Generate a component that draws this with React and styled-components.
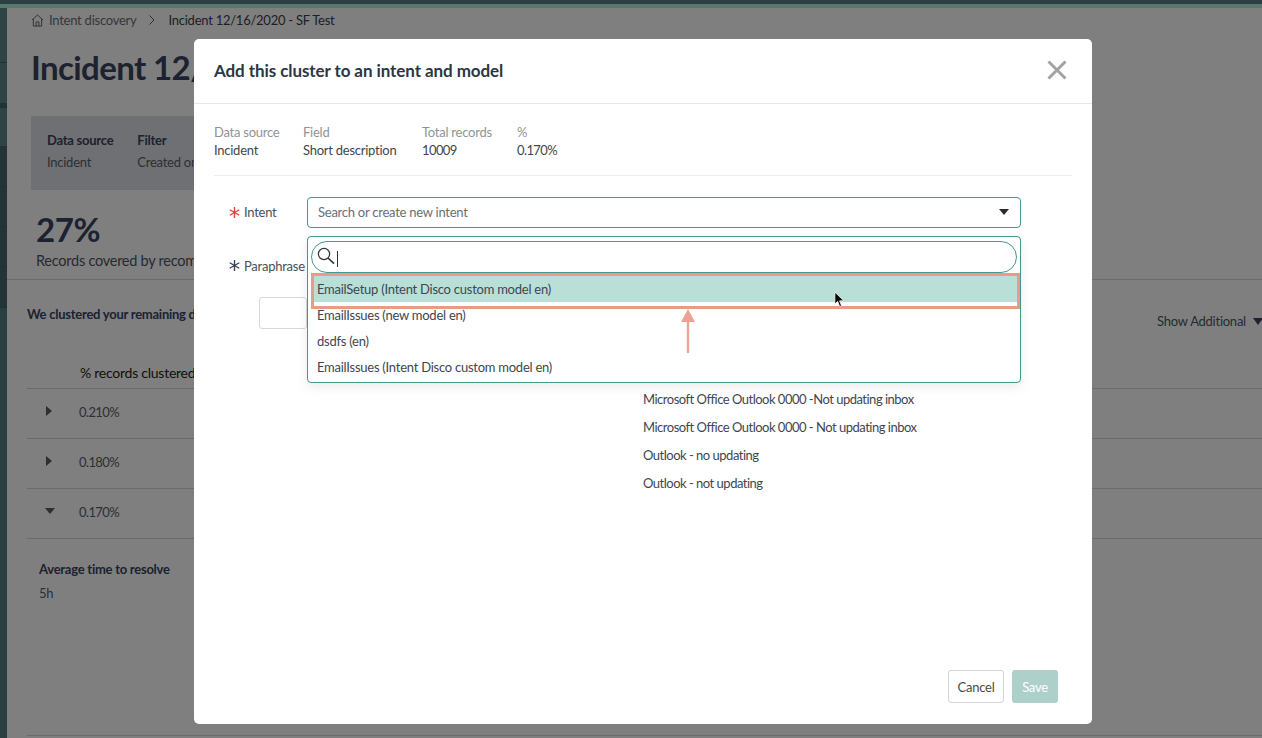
import { createGlobalStyle } from "styled-components";
import styled from "styled-components";

const GlobalStyle = createGlobalStyle`
    html, body {
        margin: 0;
        padding: 0;
        height: 100%;
        overflow: hidden;
        background: #fff;
    }
    * {
        box-sizing: border-box;
    }
    body {
        font-family: Lato, "Noto Sans", sans-serif;
        font-size: 13px;
        letter-spacing: -0.25px;
        color: #39445e;
    }
`;

const rows = ["0.210%", "0.180%", "0.170%"];
const options = [
    "EmailSetup (Intent Disco custom model en)",
    "EmailIssues (new model en)",
    "dsdfs (en)",
    "EmailIssues (Intent Disco custom model en)",
];
const phrases = [
    "Microsoft Office Outlook 0000 -Not updating inbox",
    "Microsoft Office Outlook 0000 - Not updating inbox",
    "Outlook - no updating",
    "Outlook - not updating",
];
const facts = [
    { label: "Data source", value: "Incident", width: 89 },
    { label: "Field", value: "Short description", width: 119 },
    { label: "Total records", value: "10009", width: 95, numeric: true },
    { label: "%", value: "0.170%", width: 60, numeric: true },
];
const navItems = [
    { height: 55 },
    { height: 41 },
    { height: 4, dark: true },
    { height: 39 },
    { height: 40, dark: true },
    { height: 40, dark: true },
    { height: 40, dark: true },
    { height: 41, dark: true },
];

export default function App() {
    return (
        <Screen>
            <GlobalStyle />
            <TopBar />
            <Shell>
                <Sidebar>
                    {navItems.map((item, i) => (
                        <NavItem key={i} $height={item.height} $dark={item.dark} />
                    ))}
                </Sidebar>
                <Content>
                    <Crumbs>
                        <HomeIcon />
                        <CrumbLink>Intent discovery</CrumbLink>
                        <CrumbArrow viewBox="0 0 8 12">
                            <path d="M1.5 1.5 6 6l-4.5 4.5" fill="none" stroke="#5c5c5c" strokeWidth="1" />
                        </CrumbArrow>
                        <span>Incident 12/16/2020 - SF Test</span>
                    </Crumbs>
                    <PageTitle>Incident 12/16/2020 - SF Test</PageTitle>
                    <SummaryBox>
                        <SummaryCol>
                            <strong>Data source</strong>
                            <span>Incident</span>
                        </SummaryCol>
                        <SummaryCol>
                            <strong>Filter</strong>
                            <span>Created on</span>
                        </SummaryCol>
                    </SummaryBox>
                    <Coverage>
                        <Percent>27%</Percent>
                        <CoverageText>Records covered by recommendations</CoverageText>
                    </Coverage>
                    <ClusterHead>
                        <ClusterTitle>We clustered your remaining data</ClusterTitle>
                        <ShowAdditional>
                            Show Additional <DownMark />
                        </ShowAdditional>
                    </ClusterHead>
                    <TableHead>
                        <TableHeadText>% records clustered</TableHeadText>
                    </TableHead>
                    {rows.map((row, i) => (
                        <TableRow key={row}>
                            <Caret $open={i === 2} />
                            <span>{row}</span>
                        </TableRow>
                    ))}
                    <Resolve>
                        <strong>Average time to resolve</strong>
                        <span>5h</span>
                    </Resolve>
                    <BottomRule />
                </Content>
            </Shell>

            <Backdrop />

            <Modal>
                <ModalHeader>
                    <ModalTitle>Add this cluster to an intent and model</ModalTitle>
                    <CloseIcon viewBox="0 0 20 20">
                        <path d="M1.5 1.5l17 17M18.5 1.5l-17 17" stroke="#a3a3a3" strokeWidth="3" fill="none" />
                    </CloseIcon>
                </ModalHeader>
                <ModalBody>
                    <Facts>
                        {facts.map(f => (
                            <Fact key={f.label} $width={f.width}>
                                <FactLabel>{f.label}</FactLabel>
                                <FactValue $numeric={f.numeric}>{f.value}</FactValue>
                            </Fact>
                        ))}
                    </Facts>
                    <FormRow>
                        <FieldLabel>
                            <RequiredMark color="#e0443a" />
                            Intent
                        </FieldLabel>
                        <SelectWrap>
                            <Select>
                                Search or create new intent
                                <SelectArrow />
                            </Select>
                            <Dropdown>
                                <SearchBox>
                                    <SearchIcon viewBox="0 0 18 18">
                                        <circle cx="7" cy="7" r="5.6" fill="none" stroke="#333" strokeWidth="1.2" />
                                        <path d="M11 11l6 5.6" stroke="#333" strokeWidth="1.6" />
                                    </SearchIcon>
                                    <TextCaret />
                                </SearchBox>
                                {options.map((o, i) => (
                                    <Option key={o} $active={i === 0}>{o}</Option>
                                ))}
                                <Highlight />
                                <Pointer viewBox="0 0 12 18">
                                    <path d="M1 1v13l3-3 2.2 5.5 2-.8L6 10.400h4.500z" fill="#000" stroke="#fff" strokeWidth=".8" />
                                </Pointer>
                                <UpArrow viewBox="0 0 16 44">
                                    <path d="M8 0l7 13H9.200v31H6.800V13H1z" fill="#eda394" />
                                </UpArrow>
                            </Dropdown>
                        </SelectWrap>
                    </FormRow>
                    <ParaphraseRow>
                        <FieldLabel>
                            <RequiredMark color="#39445e" />
                            Paraphrase
                        </FieldLabel>
                    </ParaphraseRow>
                    <ParaphraseInput />
                    <Phrases>
                        {phrases.map(p => <li key={p}>{p}</li>)}
                    </Phrases>
                </ModalBody>
                <ModalFooter>
                    <CancelButton>Cancel</CancelButton>
                    <SaveButton>Save</SaveButton>
                </ModalFooter>
            </Modal>
        </Screen>
    );
}

function HomeIcon() {
    return (
        <HomeSvg viewBox="0 0 14 14">
            <path d="M1 6.500 7 1l6 5.500M2.500 5.500V13h9V5.500M5.500 13V8.500h3V13" fill="none" stroke="#5c5c5c" strokeWidth="1" />
        </HomeSvg>
    );
}

function RequiredMark({ color }) {
    return (
        <MarkSvg viewBox="0 0 12 12">
            <path d="M6 0v12M.8 3l10.400 6M11.200 3 .8 9" stroke={color} strokeWidth="1.500" fill="none" />
        </MarkSvg>
    );
}

const Screen = styled.div`
    position: relative;
    width: 1262px;
    height: 738px;
    overflow: hidden;
    display: flex;
    flex-direction: column;
`;

const TopBar = styled.div`
    height: 8px;
    flex-shrink: 0;
    background: linear-gradient(#547e84 0 4px, #b0f0d8 4px);
`;

const Shell = styled.div`
    flex: 1;
    display: flex;
    min-height: 0;
`;

const Sidebar = styled.div`
    width: 7px;
    flex-shrink: 0;
    background: #547e84;
`;

const NavItem = styled.div`
    height: ${({ $height }) => $height}px;
    background: ${({ $dark }) => $dark ? "#44696e" : "#5a868a"};
    border-bottom: 1px solid #3f6267;
`;

const Content = styled.div`
    flex: 1;
    min-width: 0;
`;

const Crumbs = styled.div`
    display: flex;
    align-items: center;
    height: 24px;
    padding-left: 24px;
    color: #3a3f4a;
`;

const HomeSvg = styled.svg`
    width: 13px;
    height: 13px;
    margin-right: 5px;
`;

const CrumbLink = styled.span`
    color: #6c6f76;
`;

const CrumbArrow = styled.svg`
    width: 8px;
    height: 12px;
    margin: 0 12px;
`;

const PageTitle = styled.h1`
    width: 163px;
    margin: 14px 0 0 24px;
    overflow: hidden;
    font-size: 33px;
    line-height: 42px;
    letter-spacing: -0.6px;
    font-weight: 700;
    white-space: nowrap;
`;

const SummaryBox = styled.div`
    display: flex;
    gap: 24px;
    width: 163px;
    height: 74px;
    margin: 28px 0 0 24px;
    padding: 16px 0 16px 16px;
    overflow: hidden;
    background: #dfe0e6;
    white-space: nowrap;
`;

const SummaryCol = styled.div`
    display: flex;
    flex-direction: column;
    gap: 6px;
    line-height: 16px;
    color: #5a5e68;

    strong {
        color: #39445e;
    }
`;

const Coverage = styled.div`
    padding: 20px 0 7px 29px;
    border-bottom: 1px solid #d6d6d6;
`;

const Percent = styled.div`
    height: 40px;
    font-size: 33px;
    line-height: 38px;
    letter-spacing: -0.4px;
    font-weight: 700;
`;

const CoverageText = styled.div`
    width: 158px;
    overflow: hidden;
    font-size: 14.5px;
    line-height: 22px;
    color: #4e5462;
    white-space: nowrap;
`;

const ClusterHead = styled.div`
    display: flex;
    justify-content: space-between;
    height: 66px;
    padding: 26px 0 0 20px;
`;

const ClusterTitle = styled.strong`
    width: 167px;
    height: 18px;
    overflow: hidden;
    white-space: nowrap;
`;

const ShowAdditional = styled.span`
    margin-top: 7px;
    color: #4e5462;
    white-space: nowrap;
`;

const DownMark = styled.i`
    display: inline-block;
    width: 0;
    height: 0;
    margin: 0 -1px 1px 4px;
    border-style: solid;
    border-width: 7px 5px 0 5px;
    border-color: #39445e transparent transparent transparent;
`;

const TableHead = styled.div`
    height: 26px;
    margin: 17px 0 0 20px;
    padding-left: 53px;
    border-bottom: 1px solid #d6d6d6;
`;

const TableHeadText = styled.div`
    width: 114px;
    overflow: hidden;
    font-size: 14px;
    line-height: 20px;
    color: #222;
    white-space: nowrap;
`;

const TableRow = styled.div`
    display: flex;
    align-items: center;
    height: 50px;
    margin-left: 20px;
    padding-bottom: 4px;
    border-bottom: 1px solid #d6d6d6;
    letter-spacing: -0.6px;
    color: #5a5e68;
`;

const Caret = styled.i`
    width: 0;
    height: 0;
    margin-left: ${({ $open }) => $open ? "18px" : "19px"};
    margin-right: ${({ $open }) => $open ? "24px" : "27px"};
    margin-top: -1px;
    border-style: solid;
    border-color: transparent;
    border-width: ${({ $open }) => $open ? "6px 5px 0 5px" : "5px 0 5px 6px"};
    ${({ $open }) => $open ? "border-top-color: #5c5c5c;" : "border-left-color: #5c5c5c;"}
`;

const Resolve = styled.div`
    display: flex;
    flex-direction: column;
    gap: 8px;
    padding: 22px 0 0 32px;
    line-height: 16px;
    color: #5a5e68;

    strong {
        color: #39445e;
    }
`;

const BottomRule = styled.div`
    margin: 134px 0 0 20px;
    border-bottom: 1px solid #d6d6d6;
`;

const Backdrop = styled.div`
    position: absolute;
    inset: 0;
    background: rgba(0, 0, 0, 0.5);
`;

const Modal = styled.div`
    position: absolute;
    left: 194px;
    top: 39px;
    width: 898px;
    height: 685px;
    display: flex;
    flex-direction: column;
    background: #fff;
    border-radius: 5px;
`;

const ModalHeader = styled.div`
    display: flex;
    align-items: center;
    justify-content: space-between;
    height: 65px;
    padding: 0 25px 2px 20px;
    border-bottom: 1px solid #e8e8e8;
`;

const ModalTitle = styled.h2`
    margin: 0;
    font-size: 17px;
    font-weight: 700;
    letter-spacing: -0.08px;
    color: #2c3644;
`;

const CloseIcon = styled.svg`
    width: 20px;
    height: 20px;
`;

const ModalBody = styled.div`
    flex: 1;
    padding: 0 20px;
`;

const Facts = styled.div`
    display: flex;
    height: 72px;
    padding-top: 20px;
    border-bottom: 1px solid #ececec;
`;

const Fact = styled.div`
    display: flex;
    flex-direction: column;
    gap: 2px;
    width: ${({ $width }) => $width}px;
    line-height: 16px;
    color: #3f4650;
    white-space: nowrap;
`;

const FactLabel = styled.span`
    color: #8f9398;
`;

const FactValue = styled.span`
    letter-spacing: ${({ $numeric }) => $numeric ? "-0.6px" : "inherit"};
`;

const FormRow = styled.div`
    display: flex;
    align-items: center;
    margin-top: 21px;
`;

const FieldLabel = styled.div`
    display: flex;
    align-items: center;
    width: 93px;
    padding: 0 0 1px 15px;
    color: #4a4f58;
    white-space: nowrap;
`;

const MarkSvg = styled.svg`
    flex-shrink: 0;
    width: 11px;
    height: 11px;
    margin-right: 4px;
`;

const SelectWrap = styled.div`
    position: relative;
    width: 714px;
`;

const Select = styled.div`
    display: flex;
    align-items: center;
    justify-content: space-between;
    height: 31px;
    padding: 0 11px 1px 10px;
    border: 1.5px solid #3f9a8a;
    border-radius: 4px;
    color: #6a6e75;
`;

const SelectArrow = styled.i`
    width: 0;
    height: 0;
    border-style: solid;
    border-width: 6px 5.500px 0 5.500px;
    border-color: #2b2b2b transparent transparent transparent;
`;

const Dropdown = styled.div`
    position: absolute;
    z-index: 2;
    left: 0;
    top: 39px;
    width: 714px;
    height: 147px;
    padding: 4px 3px 0 3px;
    background: #fff;
    border: 1.5px solid #3f9a8a;
    border-radius: 4px;
    box-shadow: 0 4px 12px rgba(0, 0, 0, 0.08);
`;

const SearchBox = styled.div`
    display: flex;
    align-items: center;
    height: 32px;
    margin-bottom: 3px;
    padding-left: 5px;
    border: 1.5px solid #3f9a8a;
    border-radius: 16px;
`;

const SearchIcon = styled.svg`
    width: 18px;
    height: 18px;
    margin-top: -2px;
`;

const TextCaret = styled.i`
    width: 1px;
    height: 16px;
    margin-left: 2px;
    margin-top: 4px;
    background: #333;
`;

const Option = styled.div`
    display: flex;
    align-items: center;
    height: 26px;
    padding-left: 6px;
    background: ${({ $active }) => $active ? "#b8e0d6" : "transparent"};
    color: #3f4650;
`;

const Highlight = styled.div`
    position: absolute;
    left: 3px;
    top: 36px;
    width: 709px;
    height: 36px;
    border: 3px solid #e89a8b;
`;

const Pointer = styled.svg`
    position: absolute;
    left: 526px;
    top: 54px;
    width: 11px;
    height: 17px;
`;

const UpArrow = styled.svg`
    position: absolute;
    left: 372px;
    top: 72px;
    width: 16px;
    height: 44px;
`;

const ParaphraseRow = styled.div`
    display: flex;
    align-items: center;
    height: 20px;
    margin-top: 28px;
`;

const ParaphraseInput = styled.div`
    width: 48px;
    height: 32px;
    margin: 21px 0 0 45px;
    border: 1px solid #d8d8d8;
    border-radius: 3px;
`;

const Phrases = styled.ul`
    margin: 0;
    padding: 56px 0 0 429px;
    list-style: none;
    letter-spacing: -0.5px;
    color: #3f4650;

    li {
        height: 28px;
        line-height: 28px;
    }
`;

const ModalFooter = styled.div`
    display: flex;
    justify-content: flex-end;
    gap: 8px;
    padding: 0 34px 21px 0;
`;

const CancelButton = styled.button`
    width: 56px;
    height: 33px;
    padding: 0;
    background: #fff;
    border: 1px solid #d4d4d4;
    border-radius: 3px;
    font: inherit;
    letter-spacing: inherit;
    color: #4a4a4a;
`;

const SaveButton = styled.button`
    width: 46px;
    height: 33px;
    padding: 0;
    background: #aed0ca;
    border: none;
    border-radius: 3px;
    font: inherit;
    letter-spacing: inherit;
    color: #fff;
`;
